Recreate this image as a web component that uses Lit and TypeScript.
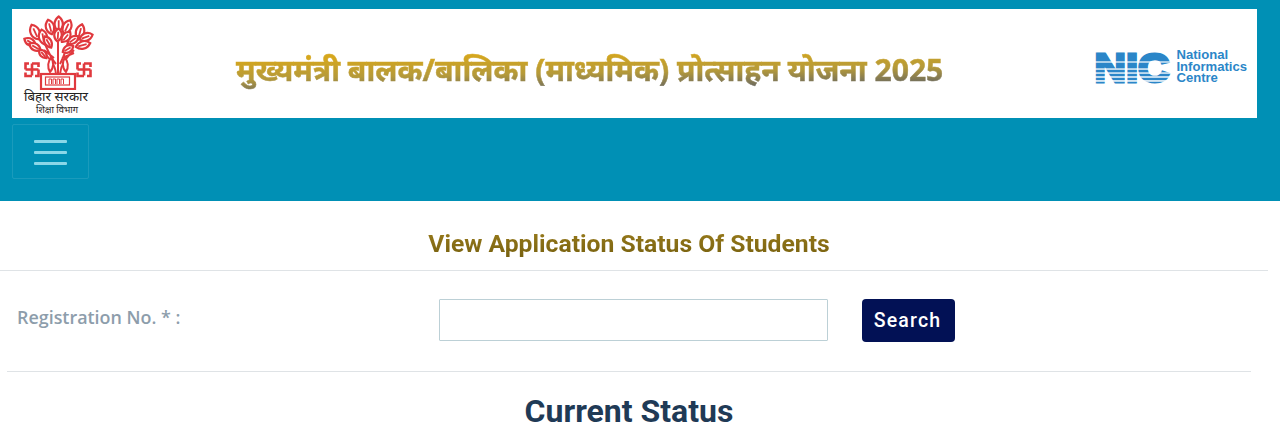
import { LitElement, html, css, svg } from "lit";
import { customElement } from "lit/decorators.js";

// x, y, rotation, length, width of the emblem's leaves
const LEAVES: number[][] = [
  [36.700, 10, 0, 15, 10], [28, 13, -15, 15, 10], [45, 13, 25, 15, 10],
  [13, 18, -25, 16, 11], [21, 23, -10, 15, 10], [36, 21, 5, 13, 9], [44, 23, 40, 13, 9],
  [58, 18, 15, 16, 10], [64, 23, 70, 14, 9], [61, 31, 75, 15, 9], [51, 26, 55, 13, 8],
  [8, 28, -60, 13, 8], [13, 33, -60, 13, 8], [26, 28, -30, 13, 8],
  [46, 35, 60, 12, 8], [21, 40, -40, 11, 7],
];

const swastika = (x: number, y: number) => svg`
  <g transform="translate(${x} ${y})" fill="none" stroke="#e0393e" stroke-width="2.600">
    <path d="M8 1.500v12M1.500 7.500h13M8 1.500h6.500v3.500M14.500 7.500v6.500h-3.500M8 14H1.500v-3.500M1.500 7.500V1.500H5"></path>
  </g>`;

@customElement("app-root")
export class AppRoot extends LitElement {
  static styles = css`
    :host { display: block; width: 1280px; height: 445px; overflow: hidden; background: #fff; font-family: "Roboto", sans-serif; }
    .top { background: #0090b5; height: 201px; padding: 9px 23px 0 12px; box-sizing: border-box; }
    .banner { height: 109px; background: #fff; display: flex; align-items: center; }
    .emblem { width: 84px; flex: none; display: flex; flex-direction: column; align-items: center; height: 109px; color: #222; font-family: "Noto Sans", "Noto Sans Devanagari", sans-serif; margin-left: 6px; }
    .emblem svg { display: block; margin-top: 5px; flex: none; filter: blur(0.3px); }
    .e1 { font-size: 13.300px; line-height: 14px; margin: -1px 0 0 -8px; white-space: nowrap; }
    .e2 { font-size: 9.300px; line-height: 12px; margin: 1px 0 0 -6px; white-space: nowrap; color: #222; }
    .title { flex: 1; text-align: center; font-family: "Noto Sans", "Noto Sans Devanagari", sans-serif; font-weight: 700; font-size: 30.100px; line-height: 40px; white-space: nowrap; background: linear-gradient(179deg, #d6a71d 20%, #b59a3a 55%, #5c6068 90%); -webkit-background-clip: text; background-clip: text; color: transparent; -webkit-text-stroke: 0.500px transparent; margin: 12px 16px 0 0; }
    .nic { flex: none; display: flex; align-items: center; gap: 5px; margin-right: 10px; padding-top: 3px; }
    .nic svg { display: block; }
    .nic-text { font-family: "Liberation Sans", Arial, sans-serif; font-weight: 700; font-size: 13.100px; line-height: 11.500px; color: #2b86c8; padding-top: 3px; }
    .toggle { width: 77px; height: 55px; margin-top: 6px; box-sizing: border-box; border: 1px solid rgba(255, 255, 255, 0.1); border-radius: 2px; display: flex; flex-direction: column; align-items: center; justify-content: center; gap: 8px; background: transparent; padding: 2px 0 0; }
    .bar { width: 33px; height: 3px; background: #8ad7e8; border-radius: 1px; }
    .main { width: 1268px; }
    h1 { margin: 0; height: 70px; display: flex; align-items: center; justify-content: center; box-sizing: border-box; padding: 15px 10px 0 0; border-bottom: 1px solid #dfe3e6; font-size: 24.700px; font-weight: 700; }
    h1 span { background: linear-gradient(180deg, #9a7c1c, #76600f); -webkit-background-clip: text; background-clip: text; color: transparent; }
    .form { margin: 0 17px 0 7px; height: 101px; display: flex; align-items: center; border-bottom: 1px solid #dfe3e6; box-sizing: border-box; }
    label { width: 432px; flex: none; padding-left: 10px; box-sizing: border-box; font-family: "Open Sans", sans-serif; font-weight: 600; font-size: 17.900px; color: #8d9dab; margin-top: -8px; }
    input { width: 389px; height: 42px; box-sizing: border-box; border: 1px solid #bcd0d6; background: #fff; border-radius: 1px; flex: none; margin-top: -2px; }
    button.search { margin: -2px 0 0 34px; width: 93px; height: 43px; background: #021155; color: #fff; border: 0; border-radius: 4px; font-family: "Roboto", sans-serif; font-weight: 500; font-size: 19.500px; letter-spacing: 1.200px; padding: 0 2px 0 0; }
    h2 { margin: 0; padding: 19px 10px 0 0; text-align: center; font-size: 32px; line-height: 40px; font-weight: 700; color: #1f3a56; }
  `;

  render() {
    return html`
      <div class="top">
        <div class="banner">
          <div class="emblem">
            <svg width="76" height="76" viewBox="0 0 76 76">
              <g fill="none" stroke="#e0393e" stroke-width="2">
                <path d="M36 60V28M34 60C33 50 28 44 18 36M38 60C39 50 44 44 52 36M34 50C30 46 28 42 23 30M38 50C41 44 44 38 46 28M32 44l-10 -8M40 44l12 -5"></path>
                <path d="M28 58c-3 -5 -2 -11 1 -14c3 3 3 10 -1 14ZM44 58c3 -5 2 -11 -1 -14c-3 3 -3 10 1 14Z" fill="#fff"></path>
              </g>
              <g fill="#fff" stroke="#e0393e" stroke-width="2.200">
                ${LEAVES.map(
                  ([x, y, r, l, w]) => svg`
                  <g transform="translate(${x} ${y}) rotate(${r})">
                    <path d="M0 ${-l / 2}C${w / 2 + 1} ${-l / 5} ${w / 2} ${l / 4} 0 ${l / 2}C${-w / 2} ${l / 4} ${-w / 2 - 1} ${-l / 5} 0 ${-l / 2}Z"></path>
                    <path d="M0 ${-l / 4}V${l / 3}" stroke-width="1.800"></path>
                  </g>`
                )}
              </g>
              ${swastika(2, 48)}${swastika(54, 48)}
              <g fill="#fff" stroke="#e0393e">
                <rect x="19" y="60" width="34" height="15" stroke-width="2.200"></rect>
                <rect x="23.500" y="63" width="24" height="8" stroke-width="1.200"></rect>
              </g>
              <path d="M27 70v-5h2.500v5M31 70v-5h2.500v5M35 70v-5h2.500v5M39 70v-5h2.500v5" fill="none" stroke="#e0393e" stroke-width="1"></path>
            </svg>
            <div class="e1">बिहार सरकार</div>
            <div class="e2">शिक्षा विभाग</div>
          </div>
          <div class="title">मुख्यमंत्री बालक/बालिका (माध्यमिक) प्रोत्साहन योजना 2025</div>
          <div class="nic">
            <svg width="78" height="44" viewBox="0 0 78 44">
              <text x="1.500" y="38.500" textLength="75" lengthAdjust="spacingAndGlyphs" font-family="Liberation Sans, Arial, sans-serif" font-weight="700" font-size="41" fill="#2b86c8" stroke="#2b86c8" stroke-width="3">NIC</text>
              <g fill="#fff">
                <rect x="0" y="18.400" width="78" height="1.200"></rect>
                <rect x="0" y="25.400" width="78" height="1.300"></rect>
                <rect x="0" y="29.400" width="78" height="1.300"></rect>
                <rect x="0" y="33.300" width="78" height="1.400"></rect>
                <rect x="0" y="37.200" width="78" height="1.500"></rect>
              </g>
            </svg>
            <div class="nic-text">National<br />Informatics<br />Centre</div>
          </div>
        </div>
        <button class="toggle" aria-label="Menu">
          <span class="bar"></span><span class="bar"></span><span class="bar"></span>
        </button>
      </div>
      <div class="main">
        <h1><span>View Application Status Of Students</span></h1>
        <div class="form">
          <label>Registration No. * :</label>
          <input type="text" />
          <button class="search">Search</button>
        </div>
        <h2>Current Status</h2>
      </div>
    `;
  }
}
